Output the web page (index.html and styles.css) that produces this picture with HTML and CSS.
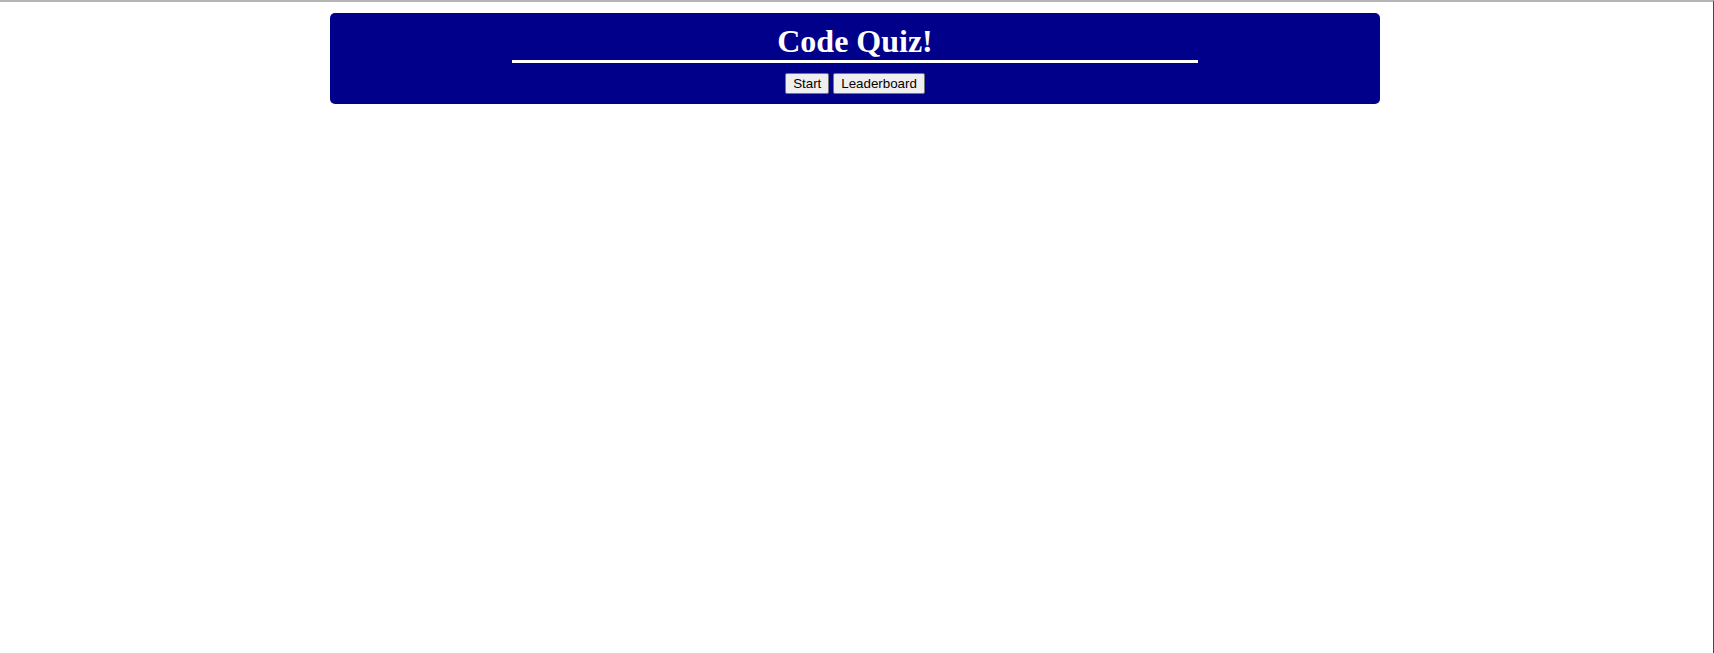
FILE: index.html
```html
<!DOCTYPE html>
<html lang="en">
<head>
<meta charset="utf-8">
<title>Code Quiz!</title>
<link rel="stylesheet" href="styles.css">
</head>
<body>
<div class="frame">
  <div class="page">
    <header class="banner">
      <h1 class="title">Code Quiz!</h1>
      <hr class="rule">
      <div class="actions">
        <button class="btn" type="button">Start</button>
        <button class="btn" type="button">Leaderboard</button>
      </div>
    </header>
  </div>
</div>
</body>
</html>
```

FILE: styles.css
```css
html, body {
  margin: 0;
  padding: 0;
  height: 100%;
  background: #ffffff;
}

.frame {
  box-sizing: border-box;
  height: 100%;
  border-top: 2px solid #b4b4b4;
  border-right: 1px solid #4a4444;
}

.page {
  padding: 11px 0 0 330px;
}

.banner {
  box-sizing: border-box;
  width: 1050px;
  height: 91px;
  background: #00008b;
  border-radius: 5px;
  padding: 10px 0 0;
  display: flex;
  flex-direction: column;
  align-items: center;
}

.title {
  margin: 0;
  font-family: "Liberation Serif", "Times New Roman", serif;
  font-weight: bold;
  font-size: 32px;
  line-height: 37px;
  color: #ffffff;
  text-align: center;
}

.rule {
  width: 686px;
  margin: 0;
  border: 0;
  height: 3px;
  background: #ffffff;
}

.actions {
  margin-top: 10px;
  display: flex;
  gap: 4px;
}

.btn {
  font-family: "Liberation Sans", Arial, sans-serif;
  font-size: 13.33px;
  height: 21px;
  padding: 1px 7px;
  background: #efefef;
  color: #000000;
  border: 1px solid #767676;
  border-radius: 2px;
}
```
